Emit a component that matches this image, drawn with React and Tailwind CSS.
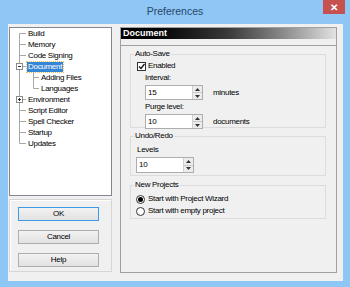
import React from 'react'

const TREE = [
  { label: 'Build', first: true },
  { label: 'Memory' },
  { label: 'Code Signing' },
  { label: 'Document', toggle: '-', selected: true },
  { label: 'Adding Files', child: true },
  { label: 'Languages', child: true, lastChild: true },
  { label: 'Environment', toggle: '+' },
  { label: 'Script Editor' },
  { label: 'Spell Checker' },
  { label: 'Startup' },
  { label: 'Updates', last: true },
]

function TreeRow({ item }) {
  const line = '#a8a8a8'
  const w = item.child ? 30 : 17
  return (
    <div className="flex h-[11px] items-center">
      <svg width={w} height="11" className="shrink-0">
        <line x1="9.5" y1={item.first ? 5.5 : 0} x2="9.5" y2={item.last ? 5.5 : 11} stroke={line} />
        {item.child ? (
          <>
            <line x1="23.5" y1="0" x2="23.5" y2={item.lastChild ? 5.5 : 11} stroke={line} />
            <line x1="23.5" y1="5.5" x2="29" y2="5.5" stroke={line} />
          </>
        ) : (
          <line x1="9.5" y1="5.5" x2="16" y2="5.5" stroke={line} />
        )}
        {item.toggle && (
          <>
            <rect x="6.5" y="2.5" width="6" height="6" fill="#fff" stroke="#8c8c8c" />
            <line x1="8" y1="5.5" x2="11" y2="5.5" stroke="#333" />
            {item.toggle === '+' && <line x1="9.5" y1="4" x2="9.5" y2="7" stroke="#333" />}
          </>
        )}
      </svg>
      <span
        className={`px-[1px] leading-[10px] ${
          item.selected ? 'bg-[#3385d6] text-white outline-dotted outline-1 outline-[#f0c060]' : 'text-black'
        }`}
      >
        {item.label}
      </span>
    </div>
  )
}

function Arrow({ up }) {
  return (
    <svg width="5" height="3">
      <path d={up ? 'M0 3 L2.5 0 L5 3 Z' : 'M0 0 L2.5 3 L5 0 Z'} fill="#333" />
    </svg>
  )
}

function Spin({ value, w, h }) {
  return (
    <div className={`flex ${h} border border-[#abadb3] bg-white`}>
      <div className={`${w} pl-[2px] flex items-center`}>{value}</div>
      <div className="flex w-[10px] flex-col border-l border-[#d0d0d0]">
        <div className="flex flex-1 items-center justify-center bg-[#ececec] border-b border-[#c8c8c8]">
          <Arrow up />
        </div>
        <div className="flex flex-1 items-center justify-center bg-[#ececec]">
          <Arrow />
        </div>
      </div>
    </div>
  )
}

function Radio({ checked, label }) {
  return (
    <div className="flex h-[12px] items-center gap-[3px]">
      <div className="flex h-[9px] w-[9px] items-center justify-center rounded-full border border-[#333] bg-white">
        {checked && <div className="h-[5px] w-[5px] rounded-full bg-black" />}
      </div>
      <span>{label}</span>
    </div>
  )
}

function Group({ title, h, children }) {
  return (
    <fieldset className={`ml-[9px] w-[196px] ${h} border border-[#dcdcdc] px-0`}>
      <legend className="ml-[3px] px-[1px] leading-[10px]">{title}</legend>
      {children}
    </fieldset>
  )
}

function Button({ label, def }) {
  return (
    <div
      className={`flex h-[14px] w-[81px] items-center justify-center bg-gradient-to-b from-[#f2f2f2] to-[#e2e2e2] ${
        def ? 'border border-[#3c9be8]' : 'border border-[#adadad]'
      }`}
    >
      {label}
    </div>
  )
}

export default function App() {
  return (
    <div className="relative h-[287px] w-[350px] overflow-hidden bg-[#8ec6f6] font-['Liberation_Sans',Arial,sans-serif] text-[8px] tracking-[-0.3px] text-black">
      <div className="flex h-[24px] items-start justify-center">
        <div className="pt-[4px] text-[10.5px] tracking-normal text-[#2a4766]">Preferences</div>
      </div>
      <div className="absolute right-[5px] top-0 flex h-[14px] w-[22px] items-center justify-center bg-[#c75050] text-[10px] font-bold text-white tracking-normal">
        ✕
      </div>

      <div className="ml-[8px] flex h-[257px] w-[335px] gap-[8px] bg-[#f0f0f0] pl-[1px] pt-[3px]">
        {/* left column */}
        <div className="flex w-[103px] flex-col gap-[3px]">
          <div className="h-[169px] border border-[#828790] bg-white">
            {TREE.map((item) => (
              <TreeRow key={item.label} item={item} />
            ))}
          </div>
          <div className="flex h-[73px] flex-col gap-[9px] border border-[#d5d5d5] pl-[8px] pt-[7px] shadow-[inset_1px_1px_0_#fff]">
            <Button label="OK" def />
            <Button label="Cancel" />
            <Button label="Help" />
          </div>
        </div>

        {/* right panel */}
        <div className="flex h-[246px] w-[217px] flex-col border border-[#a0a0a0]">
          <div className="flex h-[11px] items-center bg-gradient-to-r from-black via-[#3a3a3a] to-[#e2e2e2] pl-[2px] text-[9px] font-bold tracking-normal text-white">
            Document
          </div>
          <div className="mt-[6px] flex flex-1 flex-col border-t border-[#a0a0a0] pt-[3px]">
            <Group title="Auto-Save" h="h-[79px]">
              <div className="ml-[6px] mt-[2px] flex h-[10px] items-center gap-[2px]">
                <div className="flex h-[9px] w-[9px] items-center justify-center border border-[#333] bg-white">
                  <svg width="7" height="7">
                    <path d="M1 3.5 L3 5.5 L6.5 1" fill="none" stroke="#111" strokeWidth="1.3" />
                  </svg>
                </div>
                <span>Enabled</span>
              </div>
              <div className="ml-[14px] mt-[2px] leading-[10px]">Interval:</div>
              <div className="ml-[14px] mt-[2px] flex items-center gap-[10px]">
                <Spin value="15" w="w-[46px]" h="h-[15px]" />
                <span className="mt-[1px]">minutes</span>
              </div>
              <div className="ml-[14px] mt-[2px] leading-[10px]">Purge level:</div>
              <div className="ml-[14px] mt-[2px] flex items-center gap-[10px]">
                <Spin value="10" w="w-[46px]" h="h-[15px]" />
                <span className="mt-[1px]">documents</span>
              </div>
            </Group>
            <div className="h-[3px]" />
            <Group title="Undo/Redo" h="h-[45px]">
              <div className="ml-[6px] mt-[4px] leading-[10px]">Levels</div>
              <div className="ml-[5px] mt-[2px] flex">
                <Spin value="10" w="w-[46px]" h="h-[16px]" />
              </div>
            </Group>
            <div className="h-[4px]" />
            <Group title="New Projects" h="h-[39px]">
              <div className="ml-[5px] mt-[3px] flex flex-col">
                <Radio checked label="Start with Project Wizard" />
                <Radio label="Start with empty project" />
              </div>
            </Group>
          </div>
        </div>
      </div>
    </div>
  )
}
